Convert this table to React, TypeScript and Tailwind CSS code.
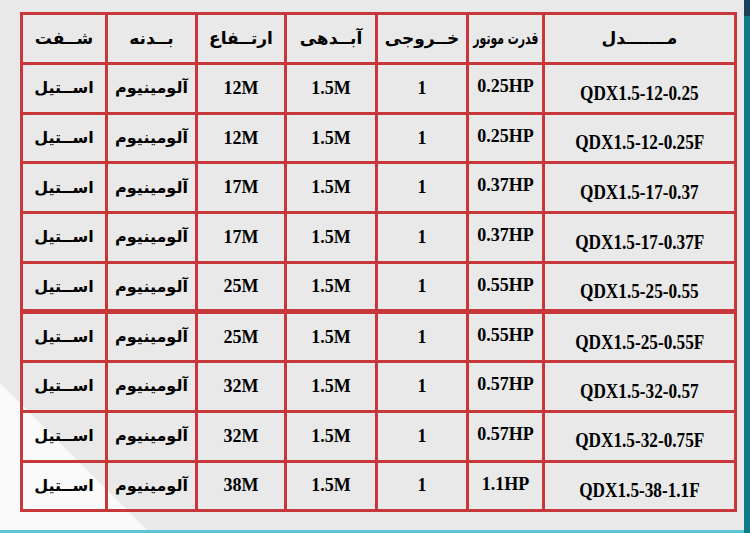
import React from 'react';

const headers = ['شــفت', 'بــدنه', 'ارتــفاع', 'آبــدهی', 'خــروجی', 'قدرت موتور', 'مـــــــدل'];

const rows = [
  { model: 'QDX1.5-12-0.25', hp: '0.25HP', h: '12M' },
  { model: 'QDX1.5-12-0.25F', hp: '0.25HP', h: '12M' },
  { model: 'QDX1.5-17-0.37', hp: '0.37HP', h: '17M' },
  { model: 'QDX1.5-17-0.37F', hp: '0.37HP', h: '17M' },
  { model: 'QDX1.5-25-0.55', hp: '0.55HP', h: '25M' },
  { model: 'QDX1.5-25-0.55F', hp: '0.55HP', h: '25M' },
  { model: 'QDX1.5-32-0.57', hp: '0.57HP', h: '32M' },
  { model: 'QDX1.5-32-0.75F', hp: '0.57HP', h: '32M' },
  { model: 'QDX1.5-38-1.1F', hp: '1.1HP', h: '38M' },
];

const fa = "font-['DejaVu_Sans',sans-serif] font-bold";
const num = "font-['Liberation_Serif',serif] font-bold";

export default function App() {
  return (
    <div className="relative w-[750px] h-[533px] overflow-hidden bg-[#e9e9e9]">
      {/* white diagonal corner */}
      <div className="absolute left-0 bottom-0 w-[150px] h-[150px] bg-[#fafafa] [clip-path:polygon(0_0,0_100%,100%_100%)]" />
      {/* right edge bar */}
      <div className="absolute right-0 top-0 w-[6px] h-full bg-[#0f7d88]">
        <div className="h-[16px] bg-[#1c3f5c]" />
      </div>
      {/* bottom line */}
      <div className="absolute left-0 bottom-0 w-[744px] h-[3px] bg-[#58c7d3]" />

      <div className="relative pt-[12px] pl-[20px]">
        <table className="w-[717px] table-fixed border-collapse text-black text-center">
          <colgroup>
            <col className="w-[85px]" />
            <col className="w-[90px]" />
            <col className="w-[89px]" />
            <col className="w-[91px]" />
            <col className="w-[91px]" />
            <col className="w-[76px]" />
            <col className="w-[192px]" />
          </colgroup>
          <thead>
            <tr className="h-[50px]">
              {headers.map((t, i) => (
                <th
                  key={i}
                  className={`border-[3px] border-[#c8383b] p-0 whitespace-nowrap ${fa} ${i === 5 ? 'text-[17px]' : 'text-[17px]'}`}
                >
                  {i === 5 ? (
                    <div className="flex justify-center">
                      <span className="shrink-0 inline-block scale-x-[0.64]">{t}</span>
                    </div>
                  ) : (
                    t
                  )}
                </th>
              ))}
            </tr>
          </thead>
          <tbody>
            {rows.map((r, i) => {
              const b = i === 5 ? 'border-[3px] border-t-[5px] border-[#c8383b] p-0' : 'border-[3px] border-[#c8383b] p-0';
              return (
                <tr key={i} className="h-[49.7px]">
                  <td className={`${b} ${fa} text-[16px]`}>اســتیل</td>
                  <td className={`${b} ${fa} text-[16px]`}>آلومینیوم</td>
                  <td className={`${b} ${num} text-[18px]`}>{r.h}</td>
                  <td className={`${b} ${num} text-[18px]`}>1.5M</td>
                  <td className={`${b} ${num} text-[18px]`}>1</td>
                  <td className={`${b} ${num} text-[18px] align-top pt-[8px]`}>{r.hp}</td>
                  <td className={`${b} ${num} text-[21px] pt-[10px] whitespace-nowrap`}>
                    <span className="inline-block scale-x-[0.82]">{r.model}</span>
                  </td>
                </tr>
              );
            })}
          </tbody>
        </table>
      </div>
    </div>
  );
}
